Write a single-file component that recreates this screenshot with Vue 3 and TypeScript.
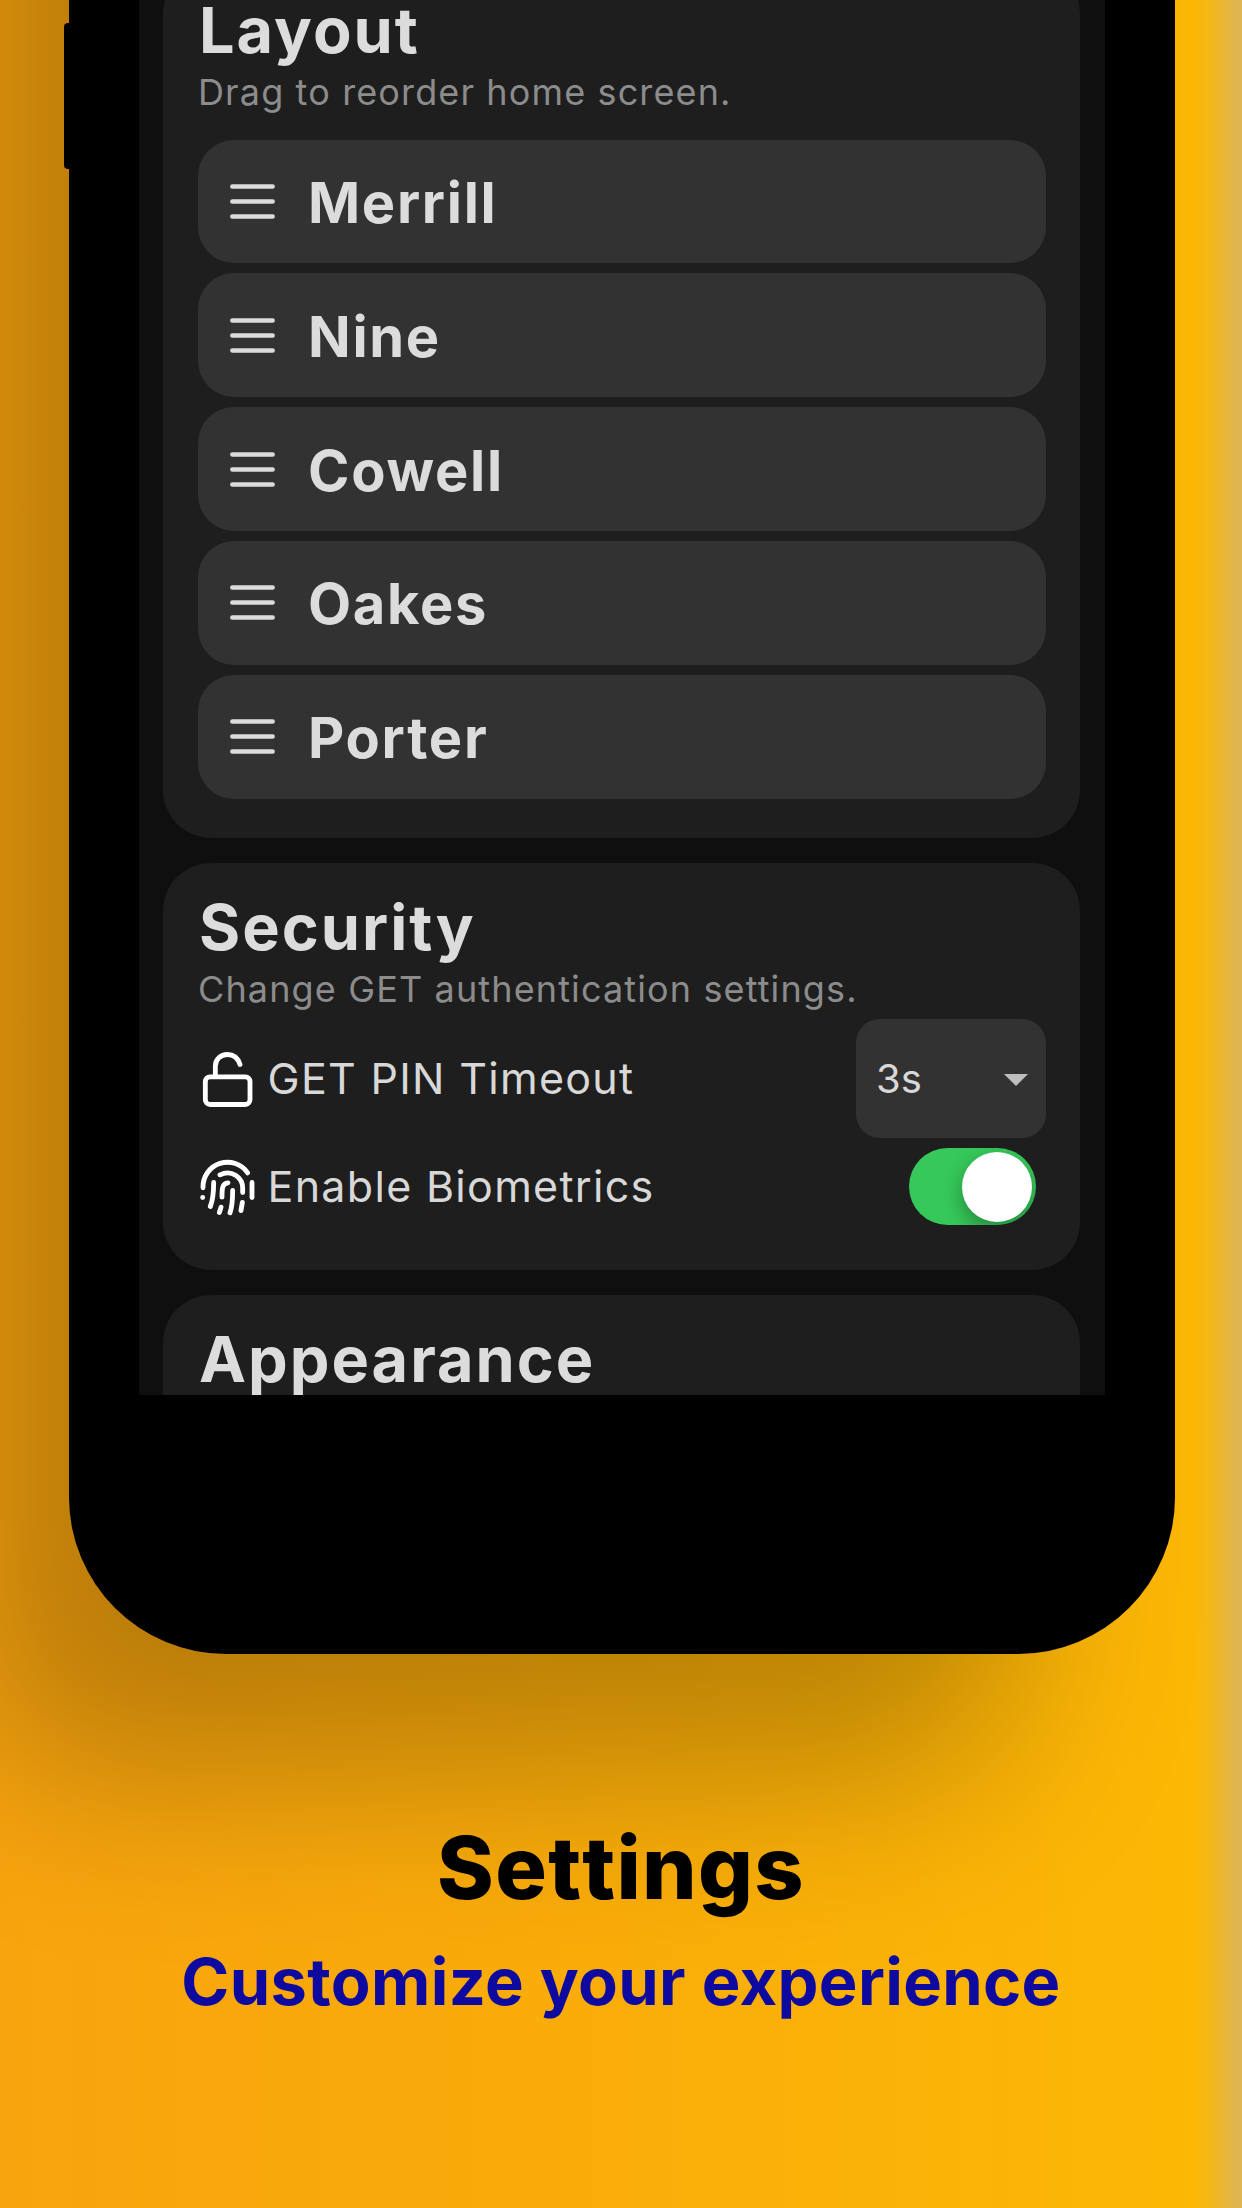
<script setup lang="ts">
const halls: string[] = ['Merrill', 'Nine', 'Cowell', 'Oakes', 'Porter']
</script>

<template>
  <main class="poster">
    <div class="phone">
      <span class="side-button"></span>
      <div class="screen">
        <section class="card layout">
          <h2>Layout</h2>
          <p class="hint">Drag to reorder home screen.</p>
          <ul class="halls">
            <li v-for="hall in halls" :key="hall" class="hall">
              <svg class="handle" viewBox="0 0 45 35">
                <path d="M2.4 2.5H42.6M2.4 17.5H42.6M2.4 32.5H42.6" />
              </svg>
              <span>{{ hall }}</span>
            </li>
          </ul>
        </section>

        <section class="card security">
          <h2>Security</h2>
          <p class="hint change">Change GET authentication settings.</p>
          <div class="setting pin">
            <svg class="icon" viewBox="54 85.5 180 180">
              <rect x="76" y="169" width="134" height="83" rx="14" />
              <path d="M106 168V137C106 117 122 102 142 102C160 102 174 113 180 132" />
            </svg>
            <span class="label">GET PIN Timeout</span>
            <div class="select">
              <span>3s</span>
              <svg viewBox="0 0 24 12"><path d="M0 0H24L12 12Z" /></svg>
            </div>
          </div>
          <div class="setting bio">
            <svg class="icon finger" viewBox="54 409.5 180 180">
              <path d="M69 502V500A73.5 73.5 0 0 1 203 457" />
              <path d="M120 463C154 446 188 470 188 503V516" />
              <path d="M216 486V531" />
              <path d="M68 531V531.1" />
              <path d="M101 486C101 518 98 540 91 558" />
              <path d="M126 530C126 505 126 489 144 487" />
              <path d="M158 510C158 538 156 560 150 577" />
              <path d="M123 560L118 576" />
              <path d="M187 546L183 570" />
            </svg>
            <span class="label">Enable Biometrics</span>
            <div class="toggle"><span></span></div>
          </div>
        </section>

        <section class="card appearance">
          <h2>Appearance</h2>
        </section>
      </div>
    </div>
    <footer class="caption">
      <h1>Settings</h1>
      <p>Customize your experience</p>
    </footer>
  </main>
</template>

<style>
body {
  margin: 0;
}
</style>

<style scoped>
.poster {
  display: flow-root;
  width: 1242px;
  height: 2208px;
  overflow: hidden;
  background:
    linear-gradient(90deg, transparent 1196px, rgba(222, 182, 82, 0.35) 1214px, #dfb552 1236px),
    linear-gradient(90deg, #f8a40e 0, #faad09 620px, #fcb805 1200px);
  font-family: Inter, sans-serif;
}
h1, h2, p, ul {
  margin: 0;
  padding: 0;
}
.phone {
  position: relative;
  box-sizing: border-box;
  width: 1105.5px;
  height: 2254px;
  margin-top: -600px;
  margin-left: 69px;
  padding: 600px 69.5px 0;
  background: #000;
  border-radius: 0 0 157px 157px;
  box-shadow: -128px 154px 180px -30px rgba(0, 0, 0, 0.25);
}
.side-button {
  position: absolute;
  left: -5.5px;
  top: 623px;
  width: 8px;
  height: 146px;
  background: #000;
  border-radius: 4px 0 0 4px;
}
.screen {
  display: flex;
  flex-direction: column;
  gap: 25px;
  box-sizing: border-box;
  height: 1394.5px;
  padding: 0 25px 0 24.5px;
  overflow: hidden;
  background: #0f0f0f;
}
.card {
  box-sizing: border-box;
  flex: none;
  padding: 34px 34.5px 0;
  background: #1e1e1e;
  border-radius: 48px;
}
.layout {
  height: 872px;
  margin-top: -34px;
}
.security {
  height: 407px;
}
.appearance {
  height: 300px;
}
h2 {
  padding-left: 1.5px;
  color: #dcdcdc;
  font-size: 63px;
  font-weight: 700;
  line-height: 60px;
  letter-spacing: 2px;
}
.hint {
  margin-top: 8px;
  padding-left: 0.5px;
  color: #8c8c8c;
  font-size: 36px;
  line-height: 48px;
  letter-spacing: 1.13px;
}
.halls {
  display: flex;
  flex-direction: column;
  gap: 10.4px;
  margin-top: 23.5px;
  list-style: none;
}
.hall {
  display: flex;
  align-items: center;
  box-sizing: border-box;
  height: 123.5px;
  padding-left: 32px;
  background: #323232;
  border-radius: 36px;
  color: #dcdcdc;
  font-size: 56px;
  font-weight: 700;
  letter-spacing: 1.7px;
}
.hall span {
  padding-top: 3px;
}
.handle {
  width: 45px;
  height: 35px;
  margin-right: 33.5px;
  fill: none;
  stroke: #dcdcdc;
  stroke-width: 4.6;
  stroke-linecap: round;
}
.setting {
  display: flex;
  align-items: center;
}
.pin {
  height: 119px;
  margin-top: 6px;
}
.bio {
  height: 77px;
  margin-top: 10px;
}
.icon {
  width: 60px;
  height: 60px;
  margin-right: 10px;
  fill: none;
  stroke: #fff;
  stroke-width: 14.5;
  stroke-linecap: round;
  stroke-linejoin: round;
}
.label {
  flex: 1;
  padding-bottom: 2px;
  color: #d8d8d8;
  font-size: 43px;
  letter-spacing: 1.3px;
  white-space: nowrap;
}
.select {
  display: flex;
  align-items: center;
  justify-content: space-between;
  box-sizing: border-box;
  width: 190px;
  height: 119px;
  padding: 0 18px 0 20.5px;
  background: #323232;
  border-radius: 24px;
  color: #d8d8d8;
  font-size: 40px;
}
.select svg {
  width: 24px;
  height: 12px;
  margin-top: 3px;
  fill: #bebebe;
}
.toggle {
  display: flex;
  align-items: center;
  justify-content: flex-end;
  box-sizing: border-box;
  width: 127px;
  height: 77px;
  margin-right: 9.5px;
  padding-right: 4px;
  overflow: hidden;
  background: #36c85a;
  border-radius: 39px;
}
.toggle span {
  width: 70px;
  height: 70px;
  background: #fff;
  border-radius: 50%;
  box-shadow: 0 8px 20px rgba(0, 0, 0, 0.32);
}
.caption {
  position: relative;
  padding-top: 166px;
  text-align: center;
}
.caption h1 {
  color: #000;
  font-size: 86px;
  font-weight: 800;
  font-kerning: none;
  line-height: 96px;
  letter-spacing: 1.3px;
}
.caption p {
  margin-top: 26px;
  color: #0e0aa0;
  font-size: 65px;
  font-weight: 700;
  line-height: 80px;
  letter-spacing: 0.35px;
}
</style>
